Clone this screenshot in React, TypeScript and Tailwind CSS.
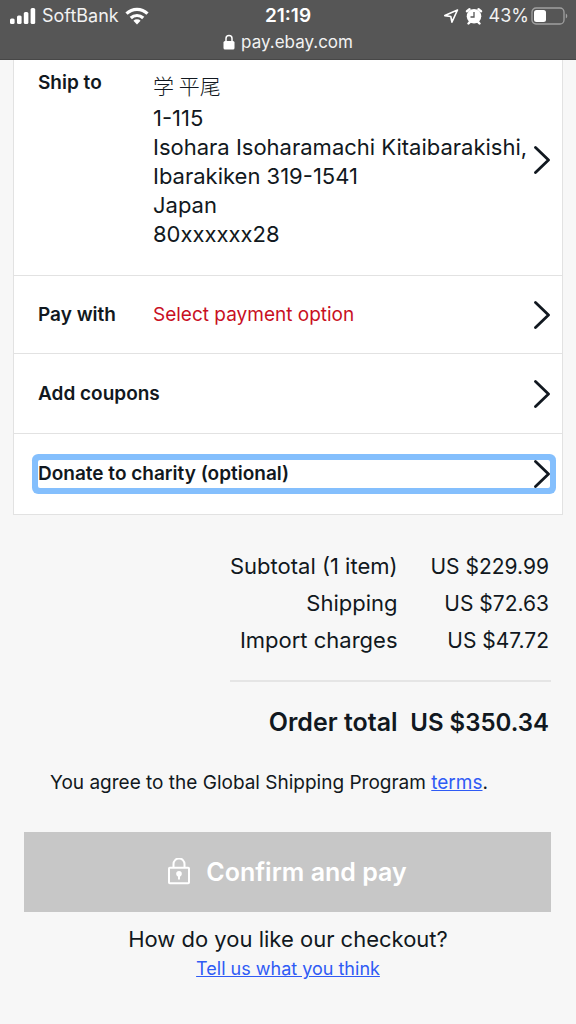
import type { ReactNode } from "react";

function Chevron() {
  return (
    <svg className="h-7 w-4 shrink-0" viewBox="0 0 16 28" fill="none" aria-hidden="true">
      <path d="M1.5 1.5 14.5 14 1.5 26.5" stroke="#111820" strokeWidth="2.8" strokeLinecap="round" strokeLinejoin="round" />
    </svg>
  );
}

function StatusBar() {
  return (
    <header className="flex h-[60px] flex-col border-b border-[#474747] bg-[#565656] px-2 pt-1 font-['Inter','Liberation_Sans',sans-serif] text-white">
      <div className="grid h-6 grid-cols-[1fr_auto_1fr] items-center">
        <div className="flex items-center gap-1.5">
          <svg className="h-[18px] w-7" viewBox="0 0 28 18" fill="#fff" aria-hidden="true">
            <rect x="2" y="11.5" width="4.600" height="5.5" rx="1.5" />
            <rect x="9" y="8.500" width="4.600" height="8.500" rx="1.5" />
            <rect x="15.800" y="5" width="4.600" height="12" rx="1.5" />
            <rect x="22.600" y="1" width="4.600" height="16" rx="1.5" />
          </svg>
          <span className="text-[18px] leading-6 text-[#f2f2f2]">SoftBank</span>
          <svg className="h-[18px] w-6" viewBox="0 0 24 18" fill="none" stroke="#fff" strokeWidth="3.200" aria-hidden="true">
            <path d="M1.500 6.700a15 15 0 0 1 21 0" />
            <path d="M5.800 11a9 9 0 0 1 12.400 0" />
            <path d="M12 17.500 8.400 13.700a5.300 5.300 0 0 1 7.200 0Z" fill="#fff" stroke="none" />
          </svg>
        </div>
        <span className="text-[19px] leading-6 font-semibold">21:19</span>
        <div className="flex items-center justify-end gap-1.5">
          <svg className="h-4 w-4" viewBox="0 0 16 16" fill="none" stroke="#fff" strokeWidth="1.600" strokeLinejoin="round" aria-hidden="true">
            <path d="M14.500 2 1.800 7.600l6 .9 1.100 5.700Z" />
          </svg>
          <svg className="h-[18px] w-[18px]" viewBox="0 0 18 18" fill="none" aria-hidden="true">
            <circle cx="9" cy="9.300" r="7.300" fill="#fff" />
            <path d="M2 4.300 4.500 2.300M16 4.300 13.500 2.300M3.500 16.500l1.800-1.800M14.500 16.500l-1.800-1.800" stroke="#fff" strokeWidth="2.400" strokeLinecap="round" />
            <path d="M9 5v5H5.500" stroke="#565656" strokeWidth="1.300" />
          </svg>
          <span className="text-[18px] leading-6 text-[#f2f2f2]">43%</span>
          <svg className="-ml-1 h-[18px] w-[37px]" viewBox="0 0 37 18" aria-hidden="true">
            <rect x="1" y="1" width="32" height="16" rx="4" fill="none" stroke="#a0a0a0" strokeWidth="1.300" />
            <rect x="3" y="3" width="12" height="12" rx="2.500" fill="#fff" />
            <path d="M34.800 6.500v5c2-1 2-4 0-5Z" fill="#a0a0a0" />
          </svg>
        </div>
      </div>
      <div className="flex h-7 items-center justify-center gap-1.5">
        <svg className="h-4 w-3" viewBox="0 0 12 16" aria-hidden="true">
          <path d="M3 8V4.500a3 3 0 0 1 6 0V8" fill="none" stroke="#fff" strokeWidth="1.500" />
          <rect x="0.500" y="7" width="11" height="8.500" rx="1.500" fill="#fff" />
        </svg>
        <span className="text-[17px] leading-6 text-[#f2f2f2]">pay.ebay.com</span>
      </div>
    </header>
  );
}

function Row({ label, children }: { label: string; children?: ReactNode }) {
  return (
    <button type="button" className="flex w-full items-center text-left">
      <span className="w-[115px] shrink-0 text-[19px] leading-6 font-semibold whitespace-nowrap">{label}</span>
      <span className="min-w-0 flex-1 text-[19px] leading-6 text-[#c80f23]">{children}</span>
      <Chevron />
    </button>
  );
}

const charges = [
  ["Subtotal (1 item)", "US $229.99"],
  ["Shipping", "US $72.63"],
  ["Import charges", "US $47.72"],
];

export default function App() {
  return (
    <div className="min-h-screen bg-[#f7f7f7] font-['Inter','Liberation_Sans','Noto_Sans_CJK_JP',sans-serif] text-[#111820]">
      <StatusBar />
      <main>
        <section className="mx-[13px] divide-y divide-[#e2e2e2] border-x border-b border-[#e2e2e2] bg-white">
          <button type="button" className="flex w-full items-start pt-[11px] pr-3 pb-[26px] pl-6 text-left">
            <span className="w-[115px] shrink-0 text-[19px] leading-6 font-semibold">Ship to</span>
            <span className="min-w-0 flex-1 text-[22px] leading-[29px]">
              <span className="block pb-1 font-['Noto_Sans_CJK_JP',sans-serif] text-[21px] font-light">学 平尾</span>
              <span className="block">1-115</span>
              <span className="block">Isohara Isoharamachi Kitaibarakishi,</span>
              <span className="block">Ibarakiken 319-1541</span>
              <span className="block">Japan</span>
              <span className="block">80xxxxxx28</span>
            </span>
            <span className="self-center"><Chevron /></span>
          </button>
          <div className="flex h-[78px] items-center pr-3 pl-6">
            <Row label="Pay with">Select payment option</Row>
          </div>
          <div className="flex h-20 items-center pr-3 pl-6">
            <Row label="Add coupons" />
          </div>
          <div className="flex h-20 items-center pr-3 pl-6">
            <div className="flex w-full rounded-xs ring-6 ring-[#84bffd]">
              <Row label="Donate to charity (optional)" />
            </div>
          </div>
        </section>

        <section className="mr-[25px] ml-auto w-[321px] pt-[33px]">
          <table className="w-full text-right text-[22px] leading-[37px]">
            <tbody>
              {charges.map(([label, amount]) => (
                <tr key={label}>
                  <th scope="row" className="p-0 text-right font-normal whitespace-nowrap">{label}</th>
                  <td className="w-[155px] p-0 pr-0.5 text-[21px] whitespace-nowrap">{amount}</td>
                </tr>
              ))}
            </tbody>
            <tfoot className="text-[25px] font-semibold">
              <tr>
                <td colSpan={2} className="p-0 pt-[21px] pb-[22px]">
                  <div className="h-0.5 bg-[#e5e5e5]" />
                </td>
              </tr>
              <tr>
                <th scope="row" className="p-0 text-right font-semibold whitespace-nowrap">Order total</th>
                <td className="w-[155px] p-0 pr-0.5 text-[24px] whitespace-nowrap">US $350.34</td>
              </tr>
            </tfoot>
          </table>
        </section>

        <p className="pt-[30px] pr-8 pl-[50px] text-[19px] leading-6">
          You agree to the Global Shipping Program <a href="#terms" className="text-[#2f5bf5] underline">terms</a>.
        </p>

        <div className="mt-[37px] mr-[25px] ml-6">
          <button type="button" disabled className="flex h-20 w-full items-center justify-center gap-4 bg-[#c7c7c7] text-[25px] leading-8 font-semibold text-white">
            <svg className="h-7 w-[22px]" viewBox="0 0 22 28" fill="none" stroke="#fff" strokeWidth="2" aria-hidden="true">
              <path d="M5.500 10V6a5.500 5.500 0 0 1 11 0v4" />
              <rect x="1" y="9.800" width="20" height="15.500" rx="0.800" />
              <circle cx="11" cy="15.800" r="2.800" fill="#fff" stroke="none" />
              <path d="M11 15.800v5.800" />
            </svg>
            Confirm and pay
          </button>
        </div>

        <footer className="pt-3 text-center">
          <p className="text-[22px] leading-[30px]">How do you like our checkout?</p>
          <p className="text-[18px] leading-[30px]">
            <a href="#feedback" className="text-[#2f5bf5] underline">Tell us what you think</a>
          </p>
        </footer>
      </main>
    </div>
  );
}
